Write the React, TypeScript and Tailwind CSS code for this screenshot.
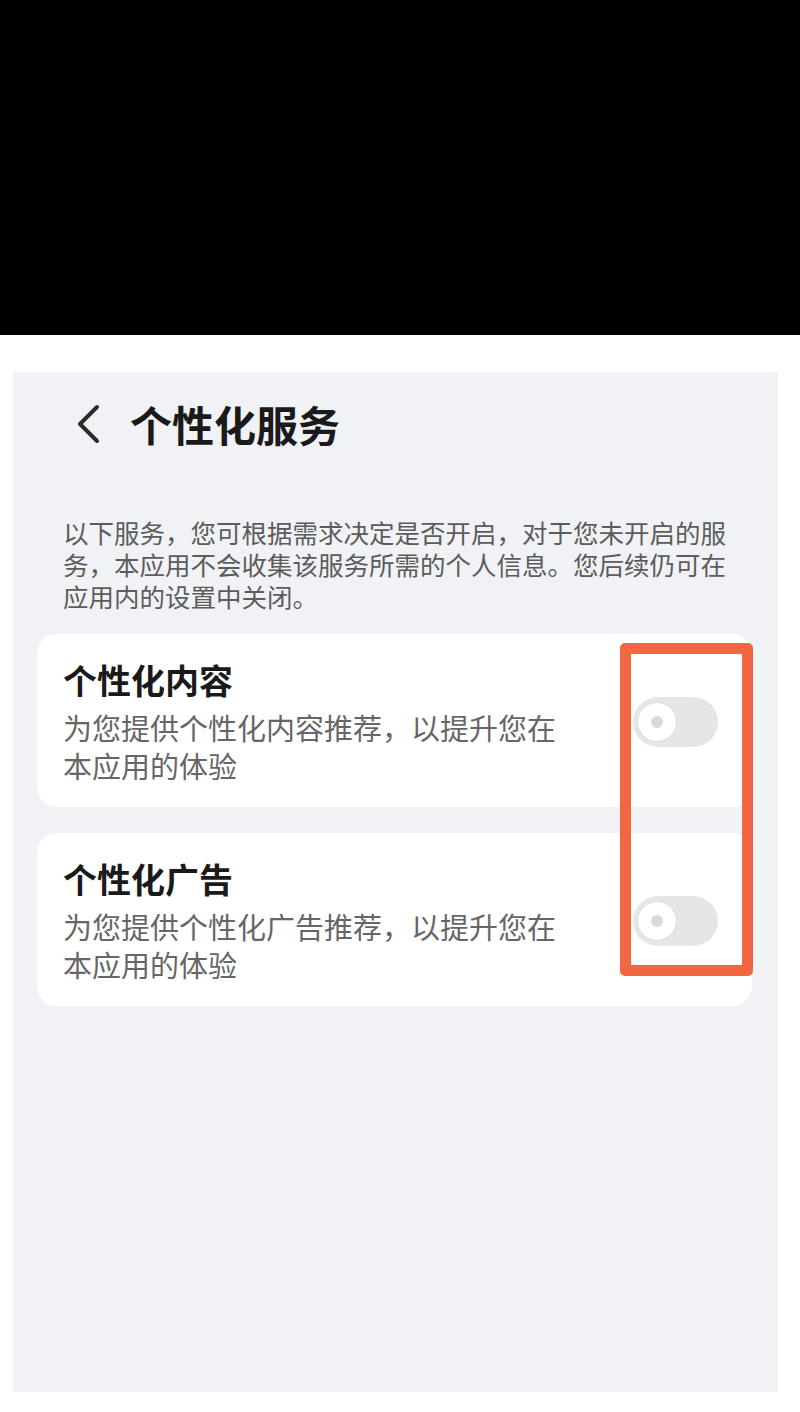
import React from 'react';

const FONT = { fontFamily: '"Noto Sans CJK SC", "Noto Sans", sans-serif' };

interface ServiceItem {
  title: string;
  desc: string;
}

const services: ServiceItem[] = [
  { title: '个性化内容', desc: '为您提供个性化内容推荐，以提升您在本应用的体验' },
  { title: '个性化广告', desc: '为您提供个性化广告推荐，以提升您在本应用的体验' },
];

function Toggle() {
  return (
    <div className="w-[85px] h-[50px] rounded-full bg-[#e6e6e6] flex items-center pl-[4px] shrink-0">
      <div className="w-[40px] h-[40px] rounded-full bg-white border border-[#dcdcdc] flex items-center justify-center">
        <div className="w-[12px] h-[12px] rounded-full bg-[#d9d9d9]" />
      </div>
    </div>
  );
}

export default function App() {
  return (
    <div className="relative w-[800px] h-[1412px] bg-white flex flex-col" style={FONT}>
      <div className="h-[335px] bg-black" />

      <div className="mt-[37px] ml-[13px] w-[765px] h-[1020px] bg-[#f0f2f5] px-[24px] pt-[22px]">
        <div className="flex items-center h-[60px] pl-[39px]">
          <svg width="26" height="40" viewBox="0 0 26 40" fill="none" className="mr-[28px]">
            <path d="M21 3 L4 20 L21 37" stroke="#2a2a2a" strokeWidth="4" strokeLinecap="round" strokeLinejoin="round" />
          </svg>
          <h1 className="text-[42px] font-bold text-[#1a1a1a] leading-none">个性化服务</h1>
        </div>

        <p className="mt-[62px] pl-[26px] w-[700px] text-[25.5px] leading-[32px] text-[#5c5c5c]">
          以下服务，您可根据需求决定是否开启，对于您未开启的服务，本应用不会收集该服务所需的个人信息。您后续仍可在应用内的设置中关闭。
        </p>

        <div className="mt-[22px] flex flex-col gap-[26px]">
          {services.map((s) => (
            <div
              key={s.title}
              className="w-[715px] bg-white rounded-[20px] pl-[26px] pr-[34px] pt-[25px] pb-[23px] flex items-center justify-between"
            >
              <div>
                <div className="text-[34px] font-bold leading-[42px] text-[#1a1a1a]">{s.title}</div>
                <div className="mt-[7px] max-w-[500px] text-[29px] leading-[38px] text-[#666666]">{s.desc}</div>
              </div>
              <Toggle />
            </div>
          ))}
        </div>
      </div>

      {/* highlight annotation over the toggles */}
      <div className="absolute left-[620px] top-[643px] w-[133px] h-[333px] border-[11px] border-[#f26641] rounded-[5px]" />
    </div>
  );
}
